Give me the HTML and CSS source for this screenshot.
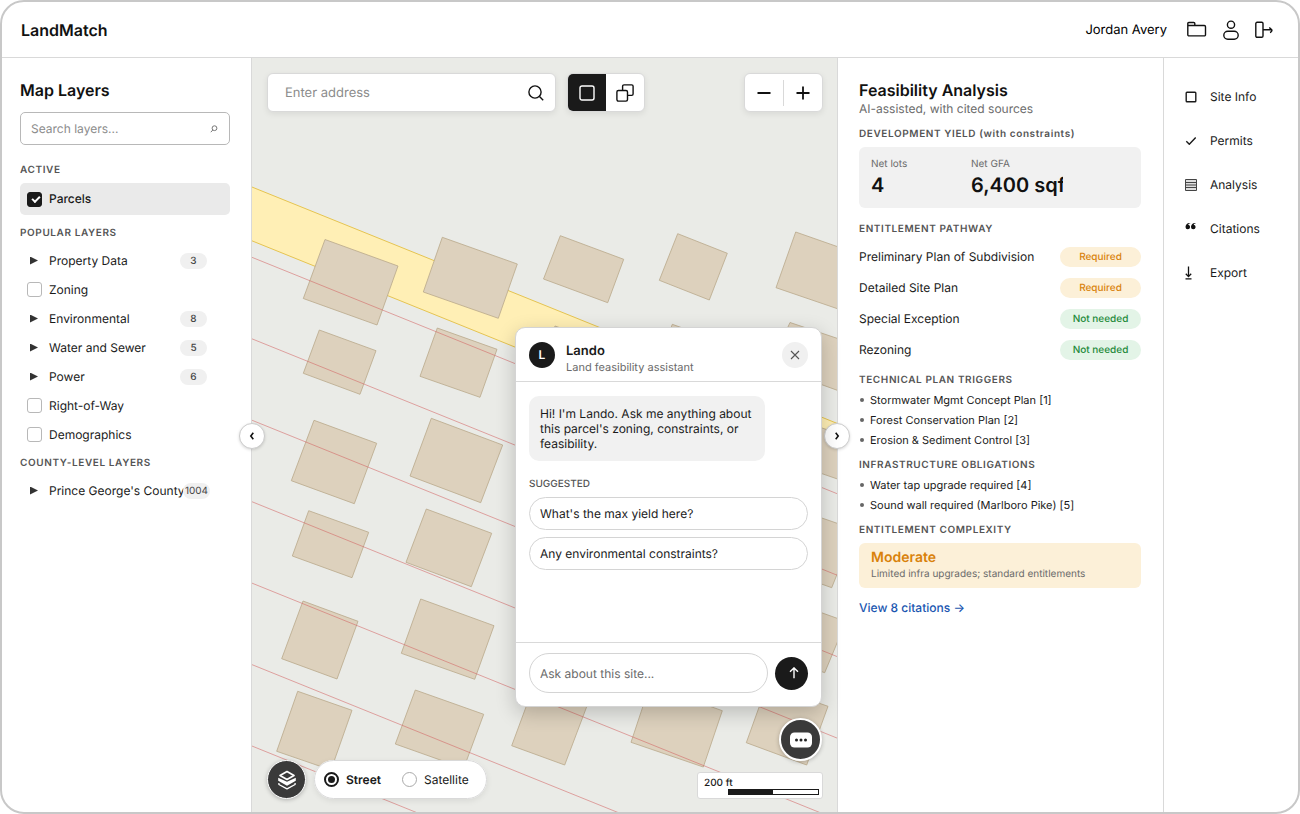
FILE: index.html
```html
<!DOCTYPE html>
<html lang="en">
<head>
<meta charset="utf-8">
<meta name="viewport" content="width=device-width, initial-scale=1">
<title>LandMatch</title>
<link rel="stylesheet" href="styles.css">
</head>
<body>
<div class="app">
  <header class="topbar">
    <h1 class="brand">LandMatch</h1>
    <div class="account">
      <span class="user-name">Jordan Avery</span>
      <button class="icon-button" aria-label="Projects">
        <svg width="20" height="20" viewBox="0 0 20 20" class="line-icon"><path d="M.8 5.500h16.500a1.200 1.200 0 0 1 1.200 1.200v8a1.200 1.200 0 0 1-1.200 1.200H2a1.200 1.200 0 0 1-1.200-1.200V3.500a1 1 0 0 1 1-1h5a1 1 0 0 1 1 1v2"/></svg>
      </button>
      <button class="icon-button" aria-label="Profile">
        <svg width="16" height="20" viewBox="0 0 16 20" class="line-icon"><circle cx="8" cy="4.700" r="3.600"/><rect x=".8" y="11.200" width="14.400" height="8" rx="4"/></svg>
      </button>
      <button class="icon-button" aria-label="Sign out">
        <svg width="18" height="18" viewBox="0 0 18 18" class="line-icon"><rect x=".8" y="1.300" width="7.200" height="15" rx="1.300"/><path d="M8 8.800h9M14.300 6.500 16.800 8.800c.3 1-.6 2.300-1.800 2.700"/></svg>
      </button>
    </div>
  </header>

  <aside class="layers">
    <h2 class="panel-title">Map Layers</h2>
    <div class="layer-search">
      <input type="text" placeholder="Search layers..." aria-label="Search layers">
      <svg width="8" height="8" viewBox="0 0 8 8" class="mini-search"><circle cx="4.500" cy="3.200" r="2.400"/><path d="M2.800 5 .8 7.200"/></svg>
    </div>

    <section class="group group-active">
      <h3 class="eyebrow">ACTIVE</h3>
      <label class="row row-selected"><input type="checkbox" class="check" checked><span class="row-label">Parcels</span></label>
    </section>

    <section class="group group-popular">
      <h3 class="eyebrow">POPULAR LAYERS</h3>
      <button class="row"><span class="caret"></span><span class="row-label">Property Data</span><span class="count">3</span></button>
      <label class="row"><input type="checkbox" class="check"><span class="row-label">Zoning</span></label>
      <button class="row"><span class="caret"></span><span class="row-label">Environmental</span><span class="count">8</span></button>
      <button class="row"><span class="caret"></span><span class="row-label">Water and Sewer</span><span class="count">5</span></button>
      <button class="row"><span class="caret"></span><span class="row-label">Power</span><span class="count">6</span></button>
      <label class="row"><input type="checkbox" class="check"><span class="row-label">Right-of-Way</span></label>
      <label class="row"><input type="checkbox" class="check"><span class="row-label">Demographics</span></label>
    </section>

    <section class="group group-county">
      <h3 class="eyebrow">COUNTY-LEVEL LAYERS</h3>
      <button class="row"><span class="caret"></span><span class="row-label">Prince George's County</span><span class="count count-large">1004</span></button>
    </section>
  </aside>

  <main class="map">
    <svg class="map-canvas" viewBox="252 58 585 754" preserveAspectRatio="xMidYMid slice" aria-hidden="true">
      <path class="road" d="M242 183 847 427.400V481.200L242 236.800Z"/>
      <g class="buildings">
        <path d="M325 239.500 398 266 377 325 303.300 298.500Z"/>
        <path d="M442.300 237.300 517.300 264 498.300 318.300 423.300 292Z"/>
        <path d="M560.300 235.700 623.700 259.300 607.700 302.700 543.500 279Z"/>
        <path d="M677.700 233.700 727.300 253.300 709.300 300 659.300 280.300Z"/>
        <path d="M795.700 232 867 257 847 312 776 287.700Z"/>
        <path d="M319.300 330 376 350.700 360 394.300 303.300 373.300Z"/>
        <path d="M437.300 328 497 349.300 480 397.300 420 376.300Z"/>
        <path d="M555 326 620 349 603 395 538 372Z"/>
        <path d="M672.300 324.300 735 347 718 393 655 370Z"/>
        <path d="M790 322.500 860 346 842 392 770 366Z"/>
        <path d="M314 420.300 376.700 443.300 354.300 503.700 291.300 480.700Z"/>
        <path d="M431.300 418.300 502.700 445 480.700 502.700 410 476Z"/>
        <path d="M785 415 865 443 849 483 765 454Z"/>
        <path d="M308.700 510.700 368.700 532.300 352 577.700 292.300 556Z"/>
        <path d="M426.300 509 491.700 533.300 471.300 586.700 406 562.300Z"/>
        <path d="M780 503.500 855 529.500 831.700 587.700 760 562Z"/>
        <path d="M303 601 358 621.300 337 679 281.700 658.700Z"/>
        <path d="M420.700 599 494 625.700 474.700 679.300 401.300 653.300Z"/>
        <path d="M775 596 846 621.500 824.700 672.700 755 648Z"/>
        <path d="M297.700 691.300 352 710.300 331 770 276.700 751.300Z"/>
        <path d="M415.300 690 483.700 714.300 463.700 768.300 395.300 744Z"/>
        <path d="M533 688 591.500 694 564.700 765 511.700 745.700Z"/>
        <path d="M650 685 722.300 710.700 703.300 767 631 742.300Z"/>
        <path d="M767 685 828 706.300 806.700 765 746.300 742.700Z"/>
      </g>
      <g class="parcel-lines">
        <path d="M242 253.300 847 497.700"/>
        <path d="M242 334.800 847 579.200"/>
        <path d="M242 416.200 847 660.600"/>
        <path d="M242 497.700 847 742.100"/>
        <path d="M242 579.100 847 823.500"/>
        <path d="M242 660.600 847 905"/>
        <path d="M242 742 847 986.400"/>
      </g>
    </svg>

    <div class="map-top">
      <div class="address card">
        <input type="text" placeholder="Enter address" aria-label="Enter address">
        <button class="icon-button" aria-label="Search">
          <svg width="16" height="16" viewBox="0 0 16 16" class="line-icon"><circle cx="7" cy="7" r="6.100"/><path d="m11.500 11.500 3.700 3.700"/></svg>
        </button>
      </div>
      <div class="modes card">
        <button class="mode mode-on" aria-label="Single parcel">
          <svg width="16" height="16" viewBox="0 0 16 16" class="line-icon"><rect x="1" y="1" width="14" height="14" rx="2"/></svg>
        </button>
        <button class="mode" aria-label="Multiple parcels">
          <svg width="18" height="18" viewBox="0 0 18 18" class="line-icon"><rect x=".9" y="6.500" width="10.600" height="10.600" rx="1.500"/><path d="M6.600 6.500V2.300A1.400 1.400 0 0 1 8 .9h7.700a1.400 1.400 0 0 1 1.400 1.400V10a1.400 1.400 0 0 1-1.400 1.400h-4.200"/></svg>
        </button>
      </div>
      <div class="zoom card">
        <button class="mode" aria-label="Zoom out"><svg width="14" height="14" viewBox="0 0 14 14" class="line-icon bold-icon"><path d="M.5 7h13"/></svg></button>
        <span class="divider"></span>
        <button class="mode" aria-label="Zoom in"><svg width="14" height="14" viewBox="0 0 14 14" class="line-icon bold-icon"><path d="M.5 7h13M7 .5v13"/></svg></button>
      </div>
    </div>

    <div class="map-bottom">
      <button class="round-button" aria-label="Layers">
        <svg width="20" height="20" viewBox="0 0 20 20"><path d="M1.200 7.800 10 11.800l8.800-4v3L10 15.800l-8.800-5Z" fill="#fff"/><path d="M10 1.500 17 5.500 10 9.500 3 5.500Z" fill="#3a3a3a" stroke="#fff" stroke-width="1.700" stroke-linejoin="round"/><path d="M1.900 13v1.500l8.100 4.400 8.100-4.400V13" fill="none" stroke="#fff" stroke-width="1.300" stroke-linejoin="round"/></svg>
      </button>
      <fieldset class="basemap card">
        <label class="basemap-option basemap-on"><input type="radio" name="basemap" class="radio" checked>Street</label>
        <label class="basemap-option"><input type="radio" name="basemap" class="radio">Satellite</label>
      </fieldset>
      <div class="scale">
        <span class="scale-text">200 ft</span>
        <span class="scale-bar"></span>
      </div>
    </div>

    <button class="collapse collapse-left" aria-label="Collapse layers"><svg width="6" height="8" viewBox="0 0 6 8"><path d="M4.300.8 1.800 4l2.500 3.200"/></svg></button>
    <button class="collapse collapse-right" aria-label="Collapse analysis"><svg width="6" height="8" viewBox="0 0 6 8"><path d="M1.700.8 4.200 4 1.700 7.200"/></svg></button>

    <section class="chat">
      <header class="chat-head">
        <span class="avatar">L</span>
        <div class="chat-id">
          <h2 class="chat-name">Lando</h2>
          <p class="chat-role">Land feasibility assistant</p>
        </div>
        <button class="chat-close" aria-label="Close"><svg width="10" height="10" viewBox="0 0 10 10"><path d="m1 1 8 8M9 1 1 9"/></svg></button>
      </header>
      <div class="chat-body">
        <p class="bubble">Hi! I'm Lando. Ask me anything about this parcel's zoning, constraints, or feasibility.</p>
        <h3 class="suggested">SUGGESTED</h3>
        <button class="suggestion">What's the max yield here?</button>
        <button class="suggestion">Any environmental constraints?</button>
      </div>
      <form class="chat-form">
        <input type="text" placeholder="Ask about this site..." aria-label="Ask about this site">
        <button type="button" class="send" aria-label="Send"><svg width="12" height="12" viewBox="0 0 12 12"><path d="M6 11.200V1M2 4.800 6 .9l4 3.900"/></svg></button>
      </form>
    </section>

    <button class="chat-toggle" aria-label="Toggle chat">
      <svg width="22" height="16" viewBox="0 0 22 16"><rect width="22" height="15" y=".5" rx="4.500" fill="#fff"/><g fill="#222"><circle cx="6.500" cy="8" r="1.500"/><circle cx="11" cy="8" r="1.500"/><circle cx="15.500" cy="8" r="1.500"/></g></svg>
    </button>
  </main>

  <aside class="analysis">
    <h2 class="panel-title">Feasibility Analysis</h2>
    <p class="subtitle">AI-assisted, with cited sources</p>

    <h3 class="eyebrow yield-head">DEVELOPMENT YIELD (with constraints)</h3>
    <dl class="yield">
      <div class="metric"><dt>Net lots</dt><dd>4</dd></div>
      <div class="metric"><dt>Net GFA</dt><dd>6,400 sqft</dd></div>
    </dl>

    <h3 class="eyebrow pathway-head">ENTITLEMENT PATHWAY</h3>
    <ul class="pathway">
      <li>Preliminary Plan of Subdivision<span class="tag tag-required">Required</span></li>
      <li>Detailed Site Plan<span class="tag tag-required">Required</span></li>
      <li>Special Exception<span class="tag tag-clear">Not needed</span></li>
      <li>Rezoning<span class="tag tag-clear">Not needed</span></li>
    </ul>

    <h3 class="eyebrow list-head">TECHNICAL PLAN TRIGGERS</h3>
    <ul class="bullets">
      <li>Stormwater Mgmt Concept Plan [1]</li>
      <li>Forest Conservation Plan [2]</li>
      <li>Erosion &amp; Sediment Control [3]</li>
    </ul>

    <h3 class="eyebrow list-head">INFRASTRUCTURE OBLIGATIONS</h3>
    <ul class="bullets">
      <li>Water tap upgrade required [4]</li>
      <li>Sound wall required (Marlboro Pike) [5]</li>
    </ul>

    <h3 class="eyebrow list-head">ENTITLEMENT COMPLEXITY</h3>
    <div class="complexity">
      <strong>Moderate</strong>
      <p>Limited infra upgrades; standard entitlements</p>
    </div>
    <a class="citations-link" href="#citations">View 8 citations →</a>
  </aside>

  <nav class="tabs" aria-label="Site sections">
    <a href="#site"><svg width="12" height="12" viewBox="0 0 12 12" class="line-icon"><rect x="1.200" y="1.200" width="9.600" height="9.600" rx=".8"/></svg>Site Info</a>
    <a href="#permits"><svg width="12" height="12" viewBox="0 0 12 12" class="line-icon"><path d="m1.300 6.300 3 3 6.400-6.800"/></svg>Permits</a>
    <a href="#analysis"><svg width="12" height="12" viewBox="0 0 12 12"><path d="M.5.500h11v11H.5ZM.5 3.500h11M.5 6h11M.5 8.500h11" fill="#ddd" stroke="#444"/></svg>Analysis</a>
    <a href="#citations"><svg width="12" height="12" viewBox="0 0 12 12"><path d="M5.300.2C4 .5 3.500 1 3.200 1.800a2.300 2.300 0 1 1-2.700 2.300C.5 1.500 2.500-.3 5.300-.1ZM10.800.2C9.500.5 9 1 8.700 1.800A2.300 2.300 0 1 1 6 4.100C6 1.500 8-.3 10.800-.1Z" fill="#111"/></svg>Citations</a>
    <a href="#export"><svg width="12" height="14" viewBox="0 0 12 14"><path d="M3.500.5v10M.8 7.800l2.700 2.800 2.700-2.800M.5 12.800h6" fill="none" stroke="#111" stroke-width="1.300"/></svg>Export</a>
  </nav>
</div>
</body>
</html>
```

FILE: styles.css
```css
* { box-sizing: border-box; }

body {
  margin: 0;
  background: #fff;
  color: #1a1a1a;
  font: 12px/16px Inter, "Liberation Sans", sans-serif;
  text-rendering: geometricPrecision;
}

h1, h2, h3, p, ul, dl, dd, fieldset { margin: 0; padding: 0; }
ul { list-style: none; }
button, input { font: inherit; color: inherit; text-rendering: inherit; }
button { padding: 0; border: 0; background: none; cursor: pointer; }
a { color: inherit; text-decoration: none; }
svg { display: block; }

.app {
  display: grid;
  grid-template: 56px 1fr / 250px minmax(0, 1fr) 327px 134px;
  min-height: 100vh;
  overflow: hidden;
  border: 2px solid #c8c8c8;
  border-radius: 24px;
}

.line-icon {
  fill: none;
  stroke: currentColor;
  stroke-width: 1.4;
  stroke-linejoin: round;
}
.bold-icon { stroke-width: 1.8; }
.icon-button { color: #111; }

/* Header */
.topbar {
  grid-column: 1 / -1;
  display: flex;
  align-items: center;
  justify-content: space-between;
  padding: 0 25px 0 19px;
  border-bottom: 1px solid #d9d9d9;
}
.brand { font-size: 16px; line-height: 24px; font-weight: 600; color: #111; }
.account { display: flex; align-items: center; gap: 16px; }
.user-name { margin-right: 4px; font-size: 13px; color: #000; }

/* Layers sidebar */
.layers {
  padding: 20px 21px 20px 18px;
  border-right: 1px solid #d9d9d9;
}
.panel-title { font-size: 16px; line-height: 24px; font-weight: 600; color: #111; }
.layer-search {
  display: flex;
  align-items: center;
  height: 33px;
  margin-top: 10px;
  padding: 0 11px 0 10px;
  border: 1px solid #b8b8b8;
  border-radius: 5px;
}
.layer-search input,
.address input {
  flex: 1;
  min-width: 0;
  padding: 0;
  border: 0;
  outline: 0;
  background: none;
}
.layer-search input::placeholder,
.address input::placeholder { color: #8c8c8c; opacity: 1; }
.mini-search { fill: none; stroke: #777; }

.eyebrow {
  font-size: 10px;
  line-height: 16px;
  font-weight: 600;
  letter-spacing: .06em;
  color: #555;
}
.group-active { margin-top: 17px; }
.group-popular { margin-top: 10px; }
.group-county { margin-top: 6px; }
.group .eyebrow { margin-bottom: 5px; }
.row {
  display: flex;
  align-items: center;
  gap: 7px;
  width: 100%;
  height: 29px;
  padding: 0 23px 0 7px;
  border-radius: 5px;
  text-align: left;
}
.group-county .row { padding-right: 20px; }
.row-selected { height: 32px; background: #eaeaea; }
.row-label { flex: 1; min-width: 0; white-space: nowrap; }
.row-selected .row-label { font-weight: 500; }
.check {
  appearance: none;
  flex: none;
  width: 15px;
  height: 15px;
  margin: 0;
  border: 1px solid #b8b8b8;
  border-radius: 3px;
  background: #fff;
}
.check:checked {
  border-color: #1a1a1a;
  background: #1a1a1a;
  position: relative;
}
.check:checked::after {
  content: "";
  position: absolute;
  left: 4px;
  top: 3px;
  width: 6px;
  height: 3px;
  border: solid #fff;
  border-width: 0 0 2px 2px;
  transform: rotate(-45deg);
}
.caret {
  flex: none;
  width: 15px;
  height: 8px;
  background: #333;
  clip-path: polygon(3px 0, 11px 50%, 3px 100%);
}
.count {
  flex: none;
  display: flex;
  justify-content: center;
  width: 27px;
  border-radius: 8px;
  background: #f0f0f0;
  color: #444;
  font-size: 10px;
  font-weight: 500;
}
.count-large { font-weight: 400; }

/* Map */
.map {
  position: relative;
  z-index: 1;
  display: flex;
  flex-direction: column;
  justify-content: space-between;
  min-height: 754px;
  padding: 15px 14px 13px 15px;
  background: #eaebe7;
}
.map-canvas { position: absolute; inset: 0; width: 100%; height: 100%; }
.road { fill: #ffefb5; stroke: #e5c451; }
.buildings { fill: #ddd1bd; stroke: #b9a88a; stroke-width: .8; stroke-linejoin: round; }
.parcel-lines { stroke: #d35f5f; stroke-opacity: .6; stroke-width: .9; }
.map-top, .map-bottom { position: relative; display: flex; }
.card {
  border: 1px solid #d9d9d9;
  border-radius: 6px;
  background: #fff;
  box-shadow: 0 2px 6px rgba(0, 0, 0, .08);
}
.address {
  display: flex;
  align-items: center;
  flex: 0 1 289px;
  height: 39px;
  padding: 0 11px 0 17px;
  margin-right: 11px;
}
.address input { font-size: 13px; }
.modes, .zoom { display: flex; align-items: center; overflow: hidden; }
.mode {
  display: grid;
  place-items: center;
  width: 38px;
  height: 37px;
  color: #111;
}
.mode-on { background: #1a1a1a; color: #fff; }
.zoom { margin-left: auto; }
.divider { width: 1px; height: 26px; background: #d9d9d9; }

.map-bottom { align-items: flex-end; }
.round-button,
.chat-toggle {
  display: grid;
  place-items: center;
  width: 39px;
  height: 39px;
  border: 1px solid #fff;
  border-radius: 50%;
  background: #3a3a3a;
  box-shadow: 0 1px 4px rgba(0, 0, 0, .25);
}
.basemap {
  display: flex;
  align-items: center;
  gap: 21px;
  height: 39px;
  margin-left: 8px;
  padding: 0 17px 0 9px;
  border-radius: 20px;
}
.basemap-option { display: flex; align-items: center; gap: 7px; }
.basemap-on { font-weight: 600; }
.radio {
  appearance: none;
  width: 15px;
  height: 15px;
  margin: 0;
  border: 1px solid #aaa;
  border-radius: 50%;
}
.radio:checked {
  border: 2px solid #1a1a1a;
  background: #1a1a1a;
  background-clip: content-box;
  padding: 2px;
}
.scale {
  display: flex;
  flex-direction: column;
  width: 126px;
  height: 27px;
  margin-left: auto;
  padding: 4px 3px 3px 6px;
  border: 1px solid #d9d9d9;
  border-radius: 3px;
  background: #fff;
}
.scale-text { font-size: 10px; line-height: 12px; font-weight: 500; }
.scale-bar {
  align-self: flex-end;
  flex: none;
  width: 91px;
  height: 6px;
  border: 1px solid #1a1a1a;
  background: linear-gradient(90deg, #1a1a1a 50%, #fff 50%);
}

.collapse {
  position: absolute;
  top: 50%;
  display: grid;
  place-items: center;
  width: 26px;
  height: 26px;
  margin-top: -12px;
  border: 1px solid #ccc;
  border-radius: 50%;
  background: #fff;
  box-shadow: 0 1px 3px rgba(0, 0, 0, .15);
}
.collapse svg { fill: none; stroke: #111; stroke-width: 1.6; }
.collapse-left { left: -13px; }
.collapse-right { right: -13px; }

/* Assistant */
.chat {
  position: absolute;
  right: 15px;
  bottom: 105px;
  display: flex;
  flex-direction: column;
  width: 307px;
  height: 380px;
  border: 1px solid #d4d4d4;
  border-radius: 10px;
  background: #fff;
  box-shadow: 0 6px 20px rgba(0, 0, 0, .2);
}
.chat-head {
  display: flex;
  align-items: center;
  height: 54px;
  padding: 0 13px;
  border-bottom: 1px solid #d9d9d9;
}
.avatar {
  display: grid;
  place-items: center;
  width: 26px;
  height: 26px;
  border-radius: 50%;
  background: #1a1a1a;
  color: #fff;
  font-weight: 600;
}
.chat-id { flex: 1; margin-left: 11px; padding-top: 8px; }
.chat-name { font-size: 13px; line-height: 16px; font-weight: 600; }
.chat-role { font-size: 11px; line-height: 16px; color: #6b6b6b; }
.chat-close {
  display: grid;
  place-items: center;
  width: 26px;
  height: 26px;
  border-radius: 50%;
  background: #f0f0f0;
}
.chat-close svg { fill: none; stroke: #555; stroke-width: 1.1; }
.chat-body {
  flex: 1;
  display: flex;
  flex-direction: column;
  padding: 14px 13px;
}
.bubble {
  width: 236px;
  margin-bottom: 15px;
  padding: 10px 11px;
  border-radius: 10px;
  background: #f1f1f1;
  line-height: 15px;
}
.suggested {
  margin-bottom: 5px;
  font-size: 10px;
  line-height: 16px;
  font-weight: 500;
  color: #555;
}
.suggestion {
  height: 33px;
  margin-bottom: 7px;
  padding: 0 10px;
  border: 1px solid #d4d4d4;
  border-radius: 17px;
  text-align: left;
}
.chat-form {
  display: flex;
  align-items: center;
  gap: 7px;
  height: 64px;
  padding: 0 13px 3px;
  border-top: 1px solid #d9d9d9;
}
.chat-form input {
  flex: 1;
  min-width: 0;
  height: 40px;
  padding: 0 10px;
  border: 1px solid #d4d4d4;
  border-radius: 20px;
  outline: 0;
}
.chat-form input::placeholder { color: #6b6b6b; opacity: 1; }
.send {
  display: grid;
  place-items: center;
  width: 33px;
  height: 33px;
  padding-left: 4px;
  border-radius: 50%;
  background: #1a1a1a;
}
.send svg { fill: none; stroke: #fff; stroke-width: 1.4; }
.chat-toggle {
  position: absolute;
  right: 15px;
  bottom: 51px;
  width: 43px;
  height: 43px;
  border-width: 2px;
}

/* Feasibility analysis */
.analysis {
  padding: 20px 22px 20px 21px;
  border-left: 1px solid #d9d9d9;
  border-right: 1px solid #d9d9d9;
}
.subtitle { margin-top: -1px; color: #6b6b6b; }
.yield-head { margin: 9px 0 5px; }
.yield {
  display: flex;
  gap: 8px;
  height: 61px;
  padding: 9px 12px;
  border-radius: 6px;
  background: #f1f1f1;
}
.metric { width: 92px; overflow: hidden; white-space: nowrap; }
.metric dt { font-size: 10px; line-height: 16px; color: #6b6b6b; }
.metric dd { font-size: 20px; line-height: 26px; font-weight: 600; color: #111; }
.pathway-head { margin: 13px 0 4px; }
.pathway li {
  display: flex;
  align-items: center;
  justify-content: space-between;
  height: 31px;
}
.tag {
  width: 81px;
  border-radius: 10px;
  font-size: 10px;
  line-height: 20px;
  font-weight: 500;
  text-align: center;
}
.tag-required { background: #fcf0d8; color: #d9820b; }
.tag-clear { background: #e3f4e7; color: #238a3b; }
.list-head { margin: 7px 0 2px; }
.bullets li { display: flex; align-items: center; gap: 6px; height: 20px; font-size: 11px; }
.bullets li::before {
  content: "";
  width: 4px;
  height: 4px;
  margin-left: 1px;
  border-radius: 50%;
  background: #666;
}
.complexity {
  height: 45px;
  margin: 5px 0 10px;
  padding: 7px 12px;
  border-radius: 6px;
  background: #fcf0d8;
}
.complexity strong { display: block; font-size: 14px; line-height: 16px; font-weight: 600; color: #d9820b; }
.complexity p { font-size: 10px; line-height: 16px; color: #6b6b6b; }
.citations-link { display: block; line-height: 20px; font-weight: 500; color: #1a56b0; }

/* Section tabs */
.tabs { display: flex; flex-direction: column; gap: 24px; padding: 29px 21px; }
.tabs a { display: flex; align-items: center; gap: 13px; line-height: 20px; }
```
